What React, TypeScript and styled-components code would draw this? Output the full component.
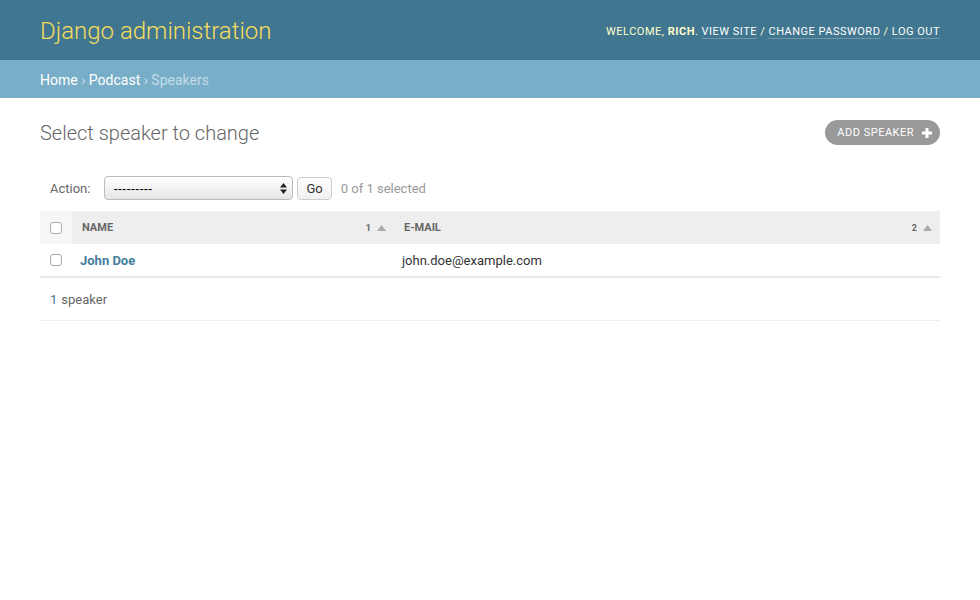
import styled, { createGlobalStyle } from 'styled-components'

const GlobalStyle = createGlobalStyle`
  html, body {
    margin: 0;
    padding: 0;
    background: #fff;
  }
  body {
    font-family: Roboto, 'Liberation Sans', Arial, sans-serif;
    font-size: 14px;
    color: #333;
  }
  a {
    text-decoration: none;
  }
`

const Header = styled.div`
  height: 60px;
  box-sizing: border-box;
  padding: 2px 40px 0;
  background: #417690;
  display: flex;
  align-items: center;
  justify-content: space-between;
`

const Branding = styled.h1`
  margin: 0;
  font-size: 24px;
  font-weight: 300;
  color: #f5dd5d;
`

const UserTools = styled.div`
  font-size: 11px;
  letter-spacing: 0.5px;
  text-transform: uppercase;
  color: #ffc;

  strong {
    font-weight: 700;
  }
`

const ToolLink = styled.a`
  color: #fff;
  border-bottom: 1px solid rgba(255, 255, 255, 0.25);
`

const Breadcrumbs = styled.div`
  height: 38px;
  box-sizing: border-box;
  padding: 2px 40px 0;
  background: #79aec8;
  color: #c4dce8;
  font-size: 14px;
  display: flex;
  align-items: center;

  a {
    color: #fff;
  }
`

const Content = styled.div`
  padding: 20px 40px;
`

const TitleRow = styled.div`
  display: flex;
  align-items: center;
  justify-content: space-between;
  padding-top: 2px;
`

const Title = styled.h1`
  margin: 0;
  font-size: 20px;
  font-weight: 300;
  color: #666;
`

const AddButton = styled.a`
  display: flex;
  align-items: center;
  gap: 8px;
  height: 25px;
  box-sizing: border-box;
  padding: 0 8px 0 12px;
  border-radius: 13px;
  background: #999;
  color: #fff;
  font-size: 11px;
  letter-spacing: 0.5px;
  text-transform: uppercase;
`

const ActionsBar = styled.div`
  margin-top: 31px;
  padding: 0 10px;
  height: 24px;
  display: flex;
  align-items: center;
  font-size: 13px;
  color: #666;
`

const ActionLabel = styled.label`
  margin-right: 14px;
`

const SelectWrap = styled.div`
  position: relative;
  width: 189px;
  height: 24px;
`

const Select = styled.select`
  appearance: none;
  width: 100%;
  height: 100%;
  box-sizing: border-box;
  padding: 0 20px 0 8px;
  border: 1px solid #bbb;
  border-radius: 4px;
  background: linear-gradient(#fff, #e6e6e6);
  font-family: 'Liberation Sans', Arial, sans-serif;
  font-size: 13px;
  color: #000;
`

const SelectArrows = styled.svg`
  position: absolute;
  right: 6px;
  top: 7px;
  pointer-events: none;
`

const GoButton = styled.button`
  margin-left: 4px;
  height: 23px;
  padding: 0 8px;
  border: 1px solid #ccc;
  border-radius: 4px;
  background: linear-gradient(#fff, #f0f0f0);
  font-family: Roboto, sans-serif;
  font-size: 13px;
  color: #333;
`

const SelectedCount = styled.span`
  margin-left: 9px;
  color: #999;
`

const Table = styled.table`
  width: 100%;
  margin-top: 11px;
  border-collapse: collapse;
`

const HeadCell = styled.th<{ $sorted?: boolean; $width?: number }>`
  height: 33px;
  padding: 0 8px 0 10px;
  text-align: left;
  background: ${({ $sorted }) => ($sorted ? '#eee' : '#f6f6f6')};
  width: ${({ $width }) => ($width ? `${$width}px` : 'auto')};
  font-size: 11px;
  font-weight: 700;
  color: #666;
  text-transform: uppercase;
  vertical-align: middle;
`

const HeadInner = styled.div`
  display: flex;
  align-items: center;
  justify-content: space-between;
`

const SortInfo = styled.span`
  display: flex;
  align-items: center;
  gap: 6px;
  font-size: 9px;
  color: #666;
`

const Cell = styled.td<{ $width?: number }>`
  height: 32px;
  padding: 0 8px;
  border-bottom: 2px solid #e8e8e8;
  font-size: 13px;
  color: #333;
  vertical-align: middle;
  width: ${({ $width }) => ($width ? `${$width}px` : 'auto')};
`

const CheckCell = styled(Cell)`
  padding: 0 0 0 10px;
  width: 22px;
`

const CheckHead = styled(HeadCell)`
  padding: 0 0 0 10px;
  width: 22px;
`

const Checkbox = styled.input.attrs({ type: 'checkbox' })`
  appearance: none;
  display: block;
  margin: 0;
  width: 12px;
  height: 12px;
  border: 1px solid #aaa;
  border-radius: 3px;
  background: #fff;
`

const NameLink = styled.a`
  color: #447e9b;
  font-weight: 700;
`

const Paginator = styled.p`
  margin: 0;
  padding: 0 10px;
  height: 42px;
  display: flex;
  align-items: center;
  border-bottom: 1px solid #eee;
  font-size: 13px;
  color: #666;
`

const Count = styled.span`
  color: #417690;
  margin-right: 4px;
`

const SortArrow = () => (
  <svg width='9' height='6' viewBox='0 0 9 6'>
    <path d='M0 6 L4.5 0 L9 6 Z' fill='#aaa' />
  </svg>
)

export default function App() {
  return (
    <>
      <GlobalStyle />
      <Header>
        <Branding>Django administration</Branding>
        <UserTools>
          Welcome, <strong>Rich</strong>. <ToolLink href='#'>View site</ToolLink> /{' '}
          <ToolLink href='#'>Change password</ToolLink> / <ToolLink href='#'>Log out</ToolLink>
        </UserTools>
      </Header>
      <Breadcrumbs>
        <a href='#'>Home</a>&nbsp;›&nbsp;<a href='#'>Podcast</a>&nbsp;›&nbsp;Speakers
      </Breadcrumbs>
      <Content>
        <TitleRow>
          <Title>Select speaker to change</Title>
          <AddButton href='#'>
            Add speaker
            <svg width='10' height='10' viewBox='0 0 10 10'>
              <path d='M3.5 0h3v3.5H10v3H6.5V10h-3V6.5H0v-3h3.5z' fill='#fff' />
            </svg>
          </AddButton>
        </TitleRow>
        <ActionsBar>
          <ActionLabel>Action:</ActionLabel>
          <SelectWrap>
            <Select defaultValue=''>
              <option value=''>---------</option>
              <option value='delete'>Delete selected speakers</option>
            </Select>
            <SelectArrows width='7' height='11' viewBox='0 0 7 11'>
              <path d='M0 4.5 L3.5 0 L7 4.5 Z M0 6.5 L3.5 11 L7 6.5 Z' fill='#222' />
            </SelectArrows>
          </SelectWrap>
          <GoButton>Go</GoButton>
          <SelectedCount>0 of 1 selected</SelectedCount>
        </ActionsBar>
        <Table>
          <thead>
            <tr>
              <CheckHead>
                <Checkbox />
              </CheckHead>
              <HeadCell $sorted $width={304}>
                <HeadInner>
                  Name
                  <SortInfo>
                    1 <SortArrow />
                  </SortInfo>
                </HeadInner>
              </HeadCell>
              <HeadCell $sorted>
                <HeadInner>
                  E-mail
                  <SortInfo>
                    2 <SortArrow />
                  </SortInfo>
                </HeadInner>
              </HeadCell>
            </tr>
          </thead>
          <tbody>
            <tr>
              <CheckCell>
                <Checkbox />
              </CheckCell>
              <Cell $width={306}>
                <NameLink href='#'>John Doe</NameLink>
              </Cell>
              <Cell>john.doe@example.com</Cell>
            </tr>
          </tbody>
        </Table>
        <Paginator>
          <Count>1</Count>speaker
        </Paginator>
      </Content>
    </>
  )
}
